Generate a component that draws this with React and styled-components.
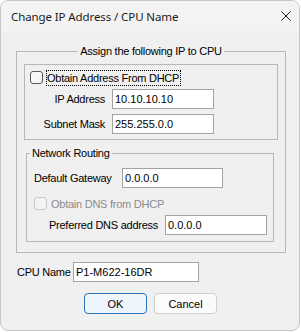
import React from 'react'
import styled, { createGlobalStyle } from 'styled-components'

const GlobalStyle = createGlobalStyle`
html, body {
  margin: 0;
  padding: 0;
  background: #ffffff;
}
body {
  font-family: "Liberation Sans", Arial, sans-serif;
  font-size: 11px;
  color: #000;
}
`

const App = () => {
  return (
    <>
      <GlobalStyle />
      <Dialog>
        <TitleBar>
          <Title>Change IP Address / CPU Name</Title>
          <CloseIcon viewBox="0 0 10 10">
            <path d="M0.5 0.5 L9.5 9.5 M9.5 0.5 L0.5 9.5" />
          </CloseIcon>
        </TitleBar>

        <Body>
          <OuterGroup>
            <Legend $center>Assign the following IP to CPU</Legend>
            <DhcpBox>
              <CheckRow $indent={5}>
                <Check />
                <CheckLabel $focused>Obtain Address From DHCP</CheckLabel>
              </CheckRow>
              <FieldRow $top={3}>
                <FieldLabel $width={81} $right>IP Address</FieldLabel>
                <Input $width={102} defaultValue="10.10.10.10" />
              </FieldRow>
              <FieldRow $top={5}>
                <FieldLabel $width={81} $right>Subnet Mask</FieldLabel>
                <Input $width={102} defaultValue="255.255.0.0" />
              </FieldRow>
            </DhcpBox>

            <RoutingGroup>
              <Legend>Network Routing</Legend>
              <RoutingInner>
                <FieldRow>
                  <FieldLabel $width={88}>Default Gateway</FieldLabel>
                  <Input $width={101} defaultValue="0.0.0.0" />
                </FieldRow>
                <CheckRow $top={7}>
                  <Check $disabled />
                  <CheckLabel $disabled>Obtain DNS from DHCP</CheckLabel>
                </CheckRow>
                <FieldRow $top={3} $indent={15}>
                  <FieldLabel $width={116}>Preferred DNS address</FieldLabel>
                  <Input $width={102} defaultValue="0.0.0.0" />
                </FieldRow>
              </RoutingInner>
            </RoutingGroup>
          </OuterGroup>

          <FieldRow $top={9} $indent={1}>
            <FieldLabel $width={56}>CPU Name</FieldLabel>
            <Input $width={126} defaultValue="P1-M622-16DR" />
          </FieldRow>

          <ButtonRow>
            <Button $primary>OK</Button>
            <Button>Cancel</Button>
          </ButtonRow>
        </Body>
      </Dialog>
    </>
  )
}

const Dialog = styled.div`
box-sizing: border-box;
width: 300px;
height: 331px;
border: 1px solid #c6c6c6;
border-radius: 8px;
background: #f0f0f0;
overflow: hidden;
display: flex;
flex-direction: column;
`
const TitleBar = styled.div`
flex: none;
height: 30px;
display: flex;
align-items: center;
justify-content: space-between;
padding: 0 8px 0 10px;
background: #f3f3f3;
`
const Title = styled.span`
font-family: "Noto Sans", sans-serif;
font-size: 11.5px;
letter-spacing: -0.1px;
color: #1b1b1b;
`
const CloseIcon = styled.svg`
width: 10px;
height: 10px;
fill: none;
stroke: #1b1b1b;
stroke-width: 1;
`
const Body = styled.div`
flex: 1;
padding: 13px 14px 0 15px;
display: flex;
flex-direction: column;
`
const OuterGroup = styled.fieldset`
box-sizing: border-box;
width: 270px;
margin: 0;
padding: 6px 7px 10px 7px;
border: 1px solid #b7b7b7;
min-inline-size: auto;
`
const Legend = styled.legend`
padding: 0 2px;
margin: ${p => (p.$center ? '0 auto' : '0 auto 0 3px')};
line-height: 14px;
font-size: 11px;
letter-spacing: -0.25px;
`
const DhcpBox = styled.div`
border: 1px solid #b7b7b7;
padding: 4px 0 5px 0;
`
const CheckRow = styled.div`
display: flex;
align-items: center;
height: 17px;
margin-top: ${p => p.$top || 0}px;
padding-left: ${p => p.$indent || 0}px;
`
const Check = styled.span`
box-sizing: border-box;
width: 13px;
height: 13px;
border: 1px solid ${p => (p.$disabled ? '#c9c9c9' : '#5a5a5a')};
border-radius: 3px;
background: ${p => (p.$disabled ? '#f3f3f3' : '#f7f7f7')};
`
const CheckLabel = styled.span`
margin-left: 3px;
line-height: 14px;
border: 1px dotted ${p => (p.$focused ? '#000' : 'transparent')};
padding-right: 1px;
letter-spacing: -0.25px;
color: ${p => (p.$disabled ? '#8c8c8c' : '#000')};
`
const FieldRow = styled.div`
display: flex;
align-items: center;
margin-top: ${p => p.$top || 0}px;
padding-left: ${p => p.$indent || 0}px;
`
const FieldLabel = styled.span`
flex: none;
box-sizing: border-box;
width: ${p => p.$width}px;
padding-right: ${p => (p.$right ? 1 : 0)}px;
margin-right: ${p => (p.$right ? 6 : 0)}px;
text-align: ${p => (p.$right ? 'right' : 'left')};
letter-spacing: -0.25px;
white-space: nowrap;
`
const Input = styled.input`
box-sizing: border-box;
width: ${p => p.$width}px;
height: 20px;
margin: 0;
padding: 0 2px;
border: 1px solid #a3a3a3;
border-radius: 0;
background: #fff;
font-family: "Liberation Sans", Arial, sans-serif;
font-size: 11px;
color: #000;
outline: none;
`
const RoutingGroup = styled.fieldset`
box-sizing: border-box;
width: 248px;
margin: 6px 0 0 2px;
padding: 0;
border: 1px solid #b7b7b7;
min-inline-size: auto;
`
const RoutingInner = styled.div`
padding: 8px 0 6px 7px;
`
const ButtonRow = styled.div`
display: flex;
justify-content: center;
gap: 7px;
margin-top: 11px;
`
const Button = styled.button`
box-sizing: border-box;
width: 63px;
height: 21px;
margin: 0;
padding: 0;
border: 1px solid ${p => (p.$primary ? '#2a73bd' : '#d0d0d0')};
border-radius: 4px;
background: ${p => (p.$primary ? '#eef4fb' : '#fbfbfb')};
font-family: "Liberation Sans", Arial, sans-serif;
font-size: 11px;
color: #000;
`

export default App
